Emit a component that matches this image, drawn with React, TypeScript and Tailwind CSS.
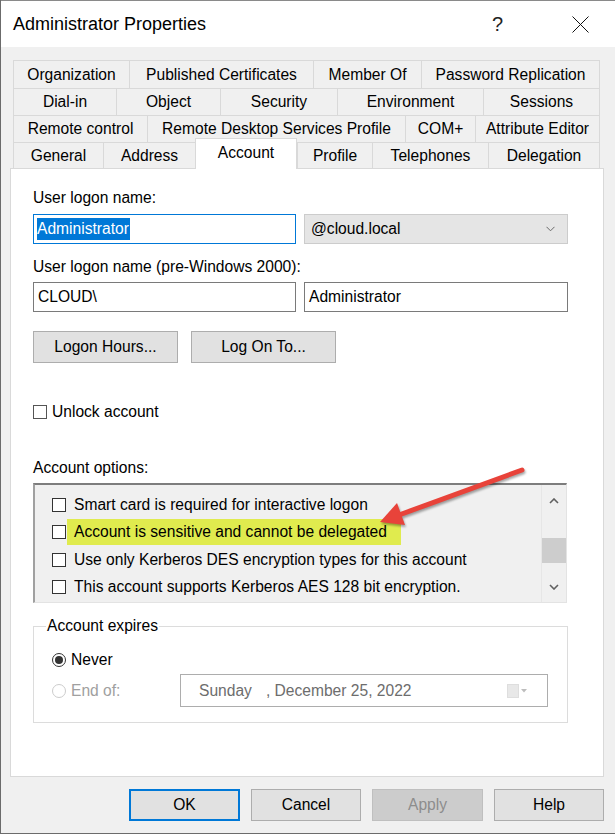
import React from 'react';

const font = "font-['Liberation_Sans',Arial,sans-serif]";

interface Tab {
  label: string;
  w: string;
}

const rows: { h: string; tabs: Tab[] }[] = [
  {
    h: 'h-[28px]',
    tabs: [
      { label: 'Organization', w: 'w-[116px]' },
      { label: 'Published Certificates', w: 'w-[184px]' },
      { label: 'Member Of', w: 'w-[108px]' },
      { label: 'Password Replication', w: 'w-[179px]' },
    ],
  },
  {
    h: 'h-[27px]',
    tabs: [
      { label: 'Dial-in', w: 'w-[103px]' },
      { label: 'Object', w: 'w-[104px]' },
      { label: 'Security', w: 'w-[117px]' },
      { label: 'Environment', w: 'w-[146px]' },
      { label: 'Sessions', w: 'w-[117px]' },
    ],
  },
  {
    h: 'h-[27px]',
    tabs: [
      { label: 'Remote control', w: 'w-[134px]' },
      { label: 'Remote Desktop Services Profile', w: 'w-[258px]' },
      { label: 'COM+', w: 'w-[70px]' },
      { label: 'Attribute Editor', w: 'w-[125px]' },
    ],
  },
];

const lastRow: Tab[] = [
  { label: 'General', w: 'w-[90px]' },
  { label: 'Address', w: 'w-[92px]' },
  { label: 'Account', w: 'w-[102px]' },
  { label: 'Profile', w: 'w-[75px]' },
  { label: 'Telephones', w: 'w-[116px]' },
  { label: 'Delegation', w: 'w-[112px]' },
];

const options = [
  'Smart card is required for interactive logon',
  'Account is sensitive and cannot be delegated',
  'Use only Kerberos DES encryption types for this account',
  'This account supports Kerberos AES 128 bit encryption.',
];

const CheckBox: React.FC = () => (
  <div className="w-[14px] h-[14px] border border-[#333333] bg-white shrink-0" />
);

const Button: React.FC<{ label: string; w: string; primary?: boolean; disabled?: boolean }> = ({
  label,
  w,
  primary,
  disabled,
}) => (
  <div
    className={
      w +
      ' h-[32px] flex items-center justify-center ' +
      (disabled
        ? 'bg-[#cccccc] border border-[#bfbfbf] text-[#8d8d8d]'
        : primary
          ? 'bg-[#e1e1e1] border-2 border-[#0078d7] text-black'
          : 'bg-[#e1e1e1] border border-[#adadad] text-black')
    }
  >
    {label}
  </div>
);

const App: React.FC = () => {
  return (
    <div
      className={`relative w-[615px] h-[834px] overflow-hidden bg-[#f0f0f0] border-l border-b border-[#6b6b6b] text-black text-[15.6px] leading-[18px] ${font}`}
    >
      {/* title bar */}
      <div className="h-[47px] bg-white border-t border-[#8a8a8a] flex items-center pl-[12px] pr-[26px]">
        <span className="text-[18px] leading-[22px]">Administrator Properties</span>
        <span className="ml-auto mr-[2px] text-[20px] leading-[22px] font-light text-[#222]">?</span>
        <svg className="ml-[67px]" width="17" height="17" viewBox="0 0 17 17">
          <path d="M0.5 0.5 L16.5 16.5 M16.5 0.5 L0.5 16.5" stroke="#111" strokeWidth="1" />
        </svg>
      </div>

      <div className="pt-[13px] pl-[9px]">
        {/* tabs */}
        <div className="ml-[3px] w-[588px]">
          {rows.map((row, i) => (
            <div key={i} className={`flex ${row.h}`}>
              {row.tabs.map((t, j) => (
                <div
                  key={t.label}
                  className={`${t.w} flex items-center justify-center whitespace-nowrap border-t border-l border-[#d9d9d9] ${
                    j === row.tabs.length - 1 ? 'border-r' : ''
                  }`}
                >
                  {t.label}
                </div>
              ))}
            </div>
          ))}
          <div className="flex items-end h-[26px]">
            {lastRow.map((t, j) =>
              t.label === 'Account' ? (
                <div
                  key={t.label}
                  className={`${t.w} relative z-10 h-[31px] -mb-px bg-white border-t border-l border-r border-[#d9d9d9] flex justify-center pt-[5px]`}
                >
                  {t.label}
                </div>
              ) : (
                <div
                  key={t.label}
                  className={`${t.w} h-[26px] flex items-center justify-center border-t border-l border-[#d9d9d9] ${
                    j === lastRow.length - 1 ? 'border-r' : ''
                  }`}
                >
                  {t.label}
                </div>
              ),
            )}
          </div>
        </div>

        {/* panel */}
        <div className="w-[594px] h-[609px] bg-white border border-[#d9d9d9] pt-[20px] pl-[22px]">
          <div className="h-[18px]">User logon name:</div>
          <div className="mt-[7px] flex gap-[8px]">
            <div className="w-[263px] h-[30px] border border-[#0078d7] flex items-center pl-[3px]">
              <span className="bg-[#0078d7] text-white h-[22px] leading-[22px] pr-px">Administrator</span>
            </div>
            <div className="w-[264px] h-[30px] bg-[#e5e5e5] border border-[#cccccc] flex items-center pl-[6px] pr-[12px]">
              <span>@cloud.local</span>
              <svg className="ml-auto" width="9" height="6" viewBox="0 0 9 6">
                <path d="M0.5 0.8 L4.5 4.8 L8.5 0.8" stroke="#6a6a6a" strokeWidth="1" fill="none" />
              </svg>
            </div>
          </div>

          <div className="mt-[14px] h-[18px]">User logon name (pre-Windows 2000):</div>
          <div className="mt-[6px] flex gap-[8px]">
            <div className="w-[263px] h-[30px] border border-[#7a7a7a] flex items-center pl-[4px]">CLOUD\</div>
            <div className="w-[264px] h-[30px] border border-[#7a7a7a] flex items-center pl-[4px]">Administrator</div>
          </div>

          <div className="mt-[19px] flex gap-[13px]">
            <Button label="Logon Hours..." w="w-[145px]" />
            <Button label="Log On To..." w="w-[145px]" />
          </div>

          <div className="mt-[40px] h-[18px] flex items-center gap-[5px]">
            <div className="w-[14px] h-[14px] border border-[#555555] bg-white" />
            <span>Unlock account</span>
          </div>

          <div className="mt-[38px] h-[18px]">Account options:</div>

          {/* options list */}
          <div className="mt-[6px] w-[534px] h-[120px] bg-[#f0f0f0] border-t-2 border-l-2 border-t-[#7d7d7d] border-l-[#a0a0a0] border-r border-b border-r-[#e3e3e3] border-b-[#e3e3e3] flex">
            <div className="flex-1 pt-[6px] pl-[17px]">
              {options.map((o, i) => (
                <div key={o} className="h-[27.5px] flex items-center gap-[8px] whitespace-nowrap">
                  <CheckBox />
                  <span
                    className={
                      i === 1 ? 'bg-[#e0eb4e] h-[26px] leading-[26px] pl-[7px] pr-[14px] -ml-[7px]' : ''
                    }
                  >
                    {o}
                  </span>
                </div>
              ))}
            </div>
            <div className="w-[25px] border-l border-[#e6e6e6] flex flex-col items-center">
              <svg className="mt-[13px]" width="10" height="6" viewBox="0 0 10 6">
                <path d="M1 5 L5 1 L9 5" stroke="#606060" strokeWidth="1.6" fill="none" />
              </svg>
              <div className="mt-[34px] w-[24px] h-[25px] bg-[#cdcdcd]" />
              <svg className="mt-[21px]" width="10" height="6" viewBox="0 0 10 6">
                <path d="M1 1 L5 5 L9 1" stroke="#606060" strokeWidth="1.6" fill="none" />
              </svg>
            </div>
          </div>

          {/* account expires */}
          <div className="relative mt-[23px] w-[535px] h-[97px] border border-[#dcdcdc]">
            <div className="absolute -top-[10px] left-[12px] bg-white px-px leading-[18px]">Account expires</div>
            <div className="pt-[24px] pl-[18px]">
              <div className="h-[18px] flex items-center gap-[5px]">
                <div className="w-[14px] h-[14px] rounded-full border border-[#333333] flex items-center justify-center">
                  <div className="w-[8px] h-[8px] rounded-full bg-[#333333]" />
                </div>
                <span>Never</span>
              </div>
              <div className="mt-[5px] flex items-center">
                <div className="w-[128px] flex items-center gap-[5px] text-[#a0a0a0]">
                  <div className="w-[14px] h-[14px] rounded-full border border-[#cccccc]" />
                  <span>End of:</span>
                </div>
                <div className="w-[368px] h-[33px] border border-[#adadad] flex items-center pl-[18px] pr-[20px] text-[#6d6d6d]">
                  <span>Sunday</span>
                  <span className="ml-[14px]">, December 25, 2022</span>
                  <div className="ml-auto flex items-center gap-[2px]">
                    <div className="w-[12px] h-[14px] bg-[#e8e8e8] border border-[#dedede]" />
                    <svg width="6" height="4" viewBox="0 0 6 4">
                      <path d="M0 0 L6 0 L3 3.5 Z" fill="#bdbdbd" />
                    </svg>
                  </div>
                </div>
              </div>
            </div>
          </div>
        </div>

        {/* footer */}
        <div className="mt-[12px] w-[594px] flex justify-end gap-[11px]">
          <Button label="OK" w="w-[111px]" primary />
          <Button label="Cancel" w="w-[110px]" />
          <Button label="Apply" w="w-[111px]" disabled />
          <Button label="Help" w="w-[110px]" />
        </div>
      </div>

      {/* annotation arrow */}
      <svg
        className="absolute left-0 top-0 pointer-events-none drop-shadow-[1px_2px_1px_rgba(0,0,0,0.35)]"
        width="615"
        height="834"
        viewBox="0 0 615 834"
      >
        <line x1="521" y1="470" x2="398" y2="515" stroke="#e8433a" strokeWidth="5" strokeLinecap="round" />
        <polygon points="379,522 404,525 396,503" fill="#e8433a" />
      </svg>
    </div>
  );
};

export default App;
